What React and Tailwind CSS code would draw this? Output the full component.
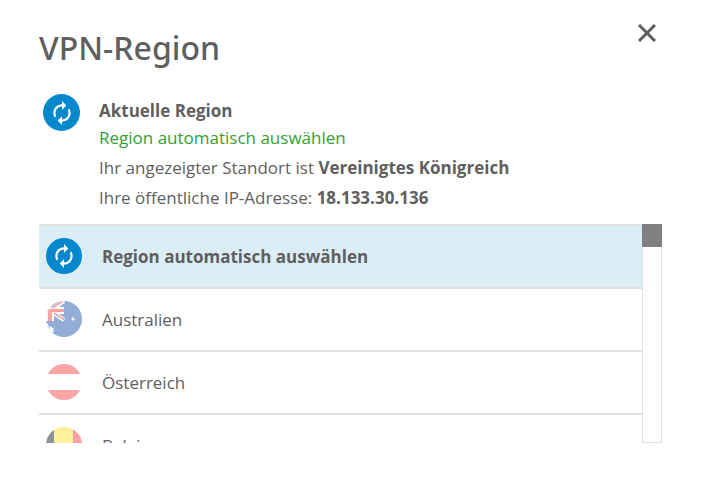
import React, { useState } from 'react';
import { MdAutorenew } from 'react-icons/md';

function AutoIcon({ className = '' }) {
  return (
    <span className={`flex shrink-0 items-center justify-center rounded-full bg-[#0689cc] text-white ${className}`}>
      <MdAutorenew className="size-[26px]" />
    </span>
  );
}

function Flag({ id, children }) {
  return (
    <svg viewBox="0 0 36 36" className="size-9 shrink-0" aria-hidden="true">
      <clipPath id={id}>
        <circle cx="18" cy="18" r="18" />
      </clipPath>
      <g clipPath={`url(#${id})`}>{children}</g>
    </svg>
  );
}

function AustraliaFlag() {
  return (
    <Flag id="flag-au">
      <rect width="36" height="36" fill="#92aed6" />
      <path d="M0 6H18V13H0ZM0 6H8V20H0Z" fill="#fff" />
      <path d="M5 9L18 0M5 10L18 19" stroke="#fff" strokeWidth="4" />
      <path d="M0 8H18V11H0ZM2 8H6V20H2Z" fill="#f7a1a5" />
      <path d="M6 7L17 0M8 12L18 18.500" stroke="#f7a1a5" strokeWidth="1.500" />
      <path d="M0 21L2 23L3 27L5 25L6 27L8 27L7 29L8 31H6L3 32L0 28Z" fill="#fff" />
      <circle cx="27" cy="18" r="1.500" fill="#fff" />
    </Flag>
  );
}

function AustriaFlag() {
  return (
    <Flag id="flag-at">
      <rect width="36" height="36" fill="#fff" />
      <rect width="36" height="10" fill="#f9a5a6" />
      <rect y="26" width="36" height="10" fill="#f9a5a6" />
    </Flag>
  );
}

function BelgiumFlag() {
  return (
    <Flag id="flag-be">
      <rect width="36" height="36" fill="#fff09b" />
      <rect width="8" height="36" fill="#8e9196" />
      <rect x="27" width="9" height="36" fill="#f9a1a6" />
    </Flag>
  );
}

const regions = [
  { id: 'auto', name: 'Region automatisch auswählen', icon: <AutoIcon className="size-9" /> },
  { id: 'au', name: 'Australien', icon: <AustraliaFlag /> },
  { id: 'at', name: 'Österreich', icon: <AustriaFlag /> },
  { id: 'be', name: 'Belgien', icon: <BelgiumFlag /> },
];

export default function App() {
  const [selected, setSelected] = useState('auto');

  return (
    <div className="flex h-screen flex-col bg-white pt-5 pr-10 pb-[35px] pl-[39px] font-['Open_Sans',sans-serif] text-[17px] text-[#5f5f5f]">
      {/* Header */}
      <header className="flex items-start justify-between">
        <h1 className="pt-2 font-['Noto_Sans',sans-serif] text-[32px] leading-10 font-medium">VPN-Region</h1>
        <button type="button" aria-label="Schließen" className="p-1 pr-1.5">
          <svg viewBox="0 0 18 18" className="size-[18px]" fill="none" stroke="#5f5f5f" strokeWidth="3">
            <path d="M1 1L17 17M17 1L1 17" />
          </svg>
        </button>
      </header>

      {/* Current region */}
      <section className="flex gap-[19px] pt-[26px] pb-[11px] pl-1">
        <AutoIcon className="size-[37px]" />
        <div className="leading-[30px]">
          <h2 className="pt-0.5 font-bold leading-[30px]">Aktuelle Region</h2>
          <p className="leading-6 text-[#33a033]">Region automatisch auswählen</p>
          <p className="pt-[3px]">
            Ihr angezeigter Standort ist <strong>Vereinigtes Königreich</strong>
          </p>
          <p>
            Ihre öffentliche IP-Adresse: <strong>18.133.30.136</strong>
          </p>
        </div>
      </section>

      {/* Region list */}
      <div className="flex min-h-0 flex-1">
        <ul className="min-w-0 flex-1 overflow-y-auto [scrollbar-width:none]">
          {regions.map((region) => (
            <li key={region.id} className="border-t-2 border-[#e1e1e1]">
              <button
                type="button"
                onClick={() => setSelected(region.id)}
                className={`flex h-[61px] w-full items-center gap-5 pb-px pl-[7px] text-left ${
                  selected === region.id ? 'bg-[#dbeef6] font-bold' : ''
                }`}
              >
                {region.icon}
                <span className="pt-0.5 leading-6">{region.name}</span>
              </button>
            </li>
          ))}
        </ul>
        <div className="w-5 border border-t-0 border-[#e1e1e1]">
          <div className="-mx-px h-[23px] bg-[#808080]" />
        </div>
      </div>
    </div>
  );
}
